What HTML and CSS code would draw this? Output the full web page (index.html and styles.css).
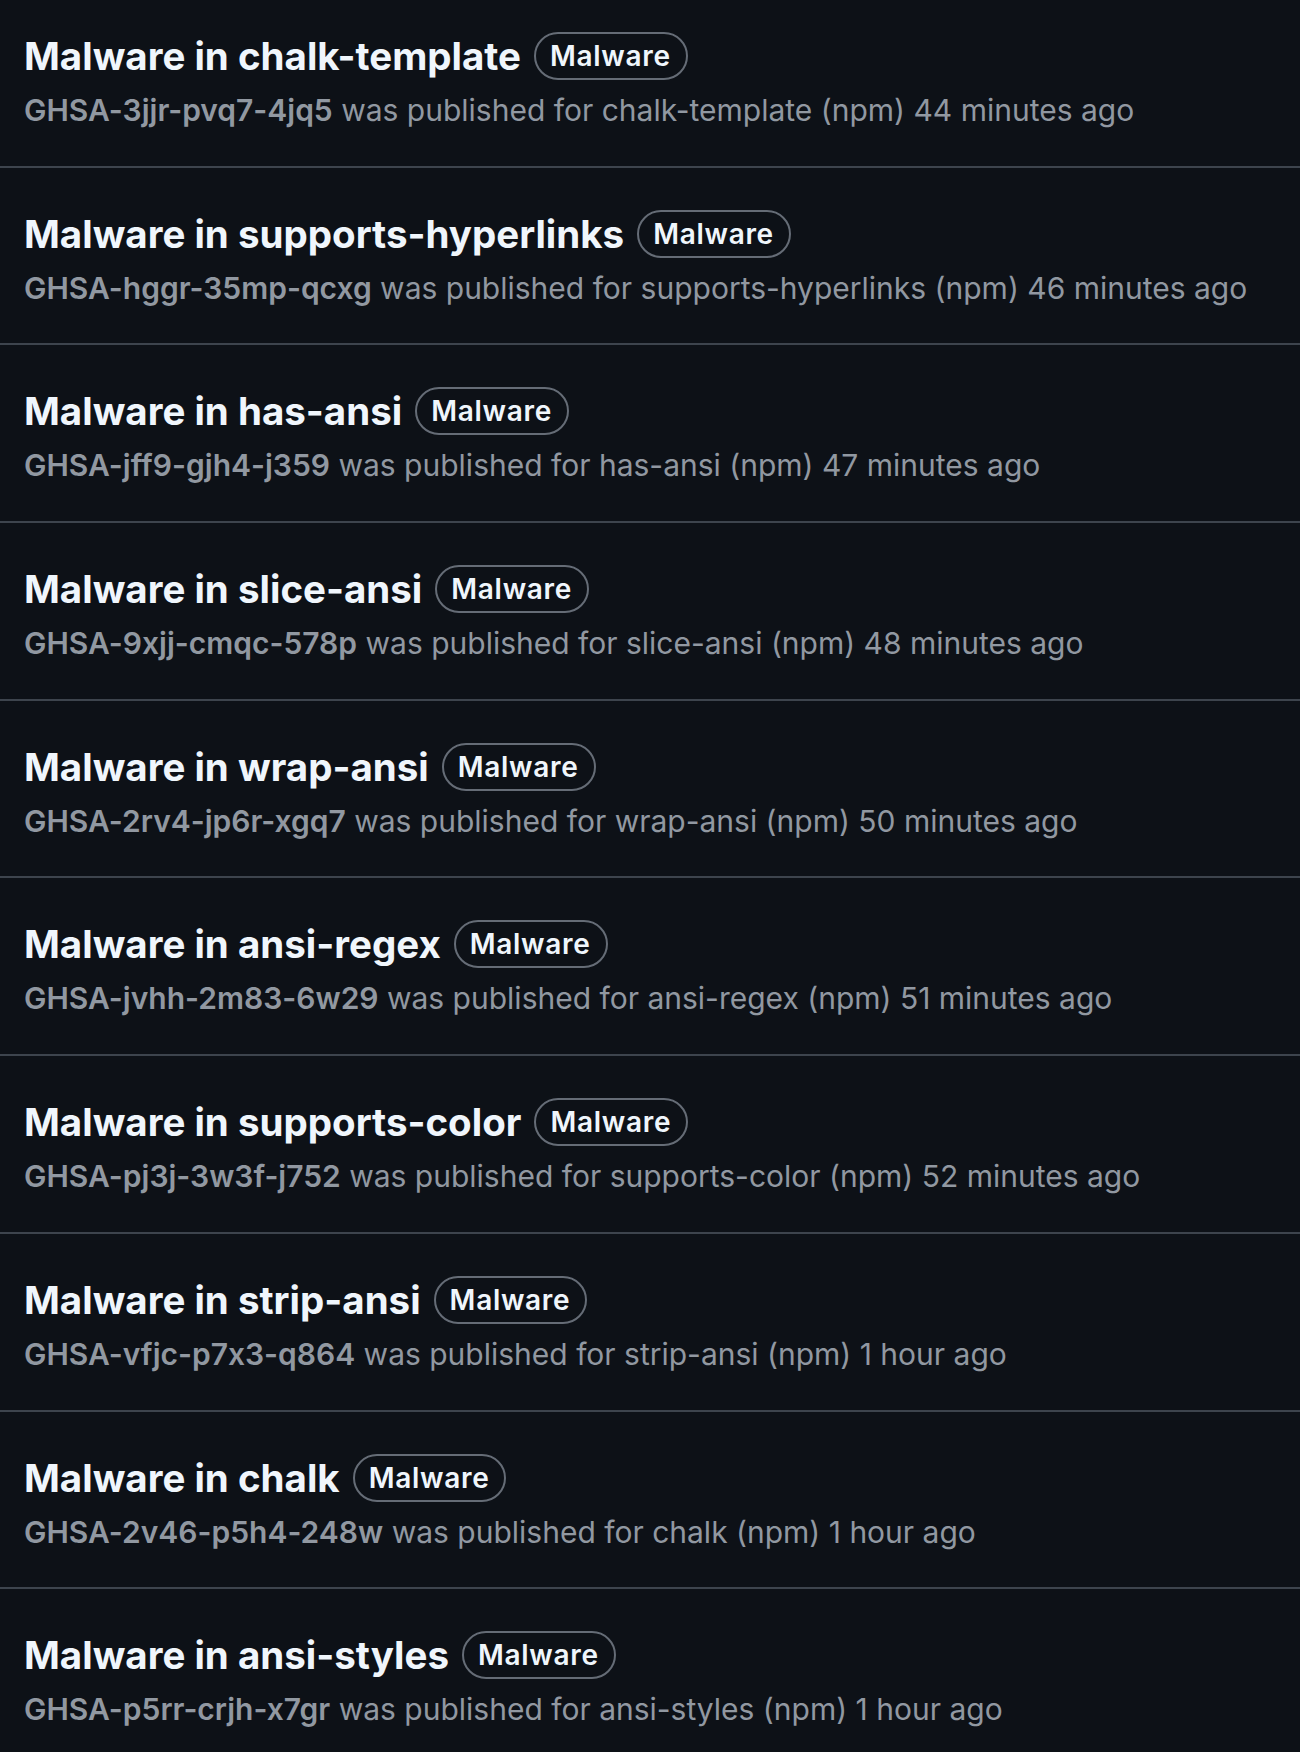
FILE: index.html
```html
<!DOCTYPE html>
<html lang="en">
<head>
  <meta charset="UTF-8" />
  <meta name="viewport" content="width=device-width, initial-scale=1" />
  <title>Malware advisories</title>
  <link rel="stylesheet" href="styles.css">
</head>
<body>

  <ul class="advisories">
    <li class="advisory">
      <div class="advisory-head">
        <h3 class="advisory-title">Malware in chalk-template</h3>
        <span class="label">Malware</span>
      </div>
      <p class="advisory-meta"><b>GHSA-3jjr-pvq7-4jq5</b> was published for chalk-template (npm) 44 minutes ago</p>
    </li>
    <li class="advisory">
      <div class="advisory-head">
        <h3 class="advisory-title">Malware in supports-hyperlinks</h3>
        <span class="label">Malware</span>
      </div>
      <p class="advisory-meta"><b>GHSA-hggr-35mp-qcxg</b> was published for supports-hyperlinks (npm) 46 minutes ago</p>
    </li>
    <li class="advisory">
      <div class="advisory-head">
        <h3 class="advisory-title">Malware in has-ansi</h3>
        <span class="label">Malware</span>
      </div>
      <p class="advisory-meta"><b>GHSA-jff9-gjh4-j359</b> was published for has-ansi (npm) 47 minutes ago</p>
    </li>
    <li class="advisory">
      <div class="advisory-head">
        <h3 class="advisory-title">Malware in slice-ansi</h3>
        <span class="label">Malware</span>
      </div>
      <p class="advisory-meta"><b>GHSA-9xjj-cmqc-578p</b> was published for slice-ansi (npm) 48 minutes ago</p>
    </li>
    <li class="advisory">
      <div class="advisory-head">
        <h3 class="advisory-title">Malware in wrap-ansi</h3>
        <span class="label">Malware</span>
      </div>
      <p class="advisory-meta"><b>GHSA-2rv4-jp6r-xgq7</b> was published for wrap-ansi (npm) 50 minutes ago</p>
    </li>
    <li class="advisory">
      <div class="advisory-head">
        <h3 class="advisory-title">Malware in ansi-regex</h3>
        <span class="label">Malware</span>
      </div>
      <p class="advisory-meta"><b>GHSA-jvhh-2m83-6w29</b> was published for ansi-regex (npm) 51 minutes ago</p>
    </li>
    <li class="advisory">
      <div class="advisory-head">
        <h3 class="advisory-title">Malware in supports-color</h3>
        <span class="label">Malware</span>
      </div>
      <p class="advisory-meta"><b>GHSA-pj3j-3w3f-j752</b> was published for supports-color (npm) 52 minutes ago</p>
    </li>
    <li class="advisory">
      <div class="advisory-head">
        <h3 class="advisory-title">Malware in strip-ansi</h3>
        <span class="label">Malware</span>
      </div>
      <p class="advisory-meta"><b>GHSA-vfjc-p7x3-q864</b> was published for strip-ansi (npm) 1 hour ago</p>
    </li>
    <li class="advisory">
      <div class="advisory-head">
        <h3 class="advisory-title">Malware in chalk</h3>
        <span class="label">Malware</span>
      </div>
      <p class="advisory-meta"><b>GHSA-2v46-p5h4-248w</b> was published for chalk (npm) 1 hour ago</p>
    </li>
    <li class="advisory">
      <div class="advisory-head">
        <h3 class="advisory-title">Malware in ansi-styles</h3>
        <span class="label">Malware</span>
      </div>
      <p class="advisory-meta"><b>GHSA-p5rr-crjh-x7gr</b> was published for ansi-styles (npm) 1 hour ago</p>
    </li>
  </ul>

</body>
</html>
```

FILE: styles.css
```css
html, body { background: #0d1117; }
body {
  margin: 0;
  font-family: Inter, "Noto Sans", sans-serif;
  font-feature-settings: "calt" 0;
  color: #f0f6fc;
  overflow: hidden;
}

.advisories {
  list-style: none; margin: -10px 0 0; padding: 0;
}
.advisory {
  padding: 42px 24px 35.7px;
  border-bottom: 2px solid #3d444d;
}
.advisory:last-child { border-bottom: none; }

.advisory-head {
  display: flex; align-items: center; gap: 13px;
}
.advisory-title {
  margin: 0; font-size: 38.5px; line-height: 48px;
  font-weight: 700; color: #f0f6fc;
}

.label {
  display: inline-flex; align-items: center;
  height: 48px; box-sizing: border-box;
  padding: 0 15px 0 14px;
  border: 2px solid #656c76; border-radius: 999px;
  font-size: 28px; font-weight: 600; letter-spacing: 0.7px;
  color: #f0f6fc;
}

.advisory-meta {
  margin: 10px 0 0; font-size: 30px; line-height: 40px;
  color: #9198a1;
}
.advisory-meta b { font-weight: 600; }
```
